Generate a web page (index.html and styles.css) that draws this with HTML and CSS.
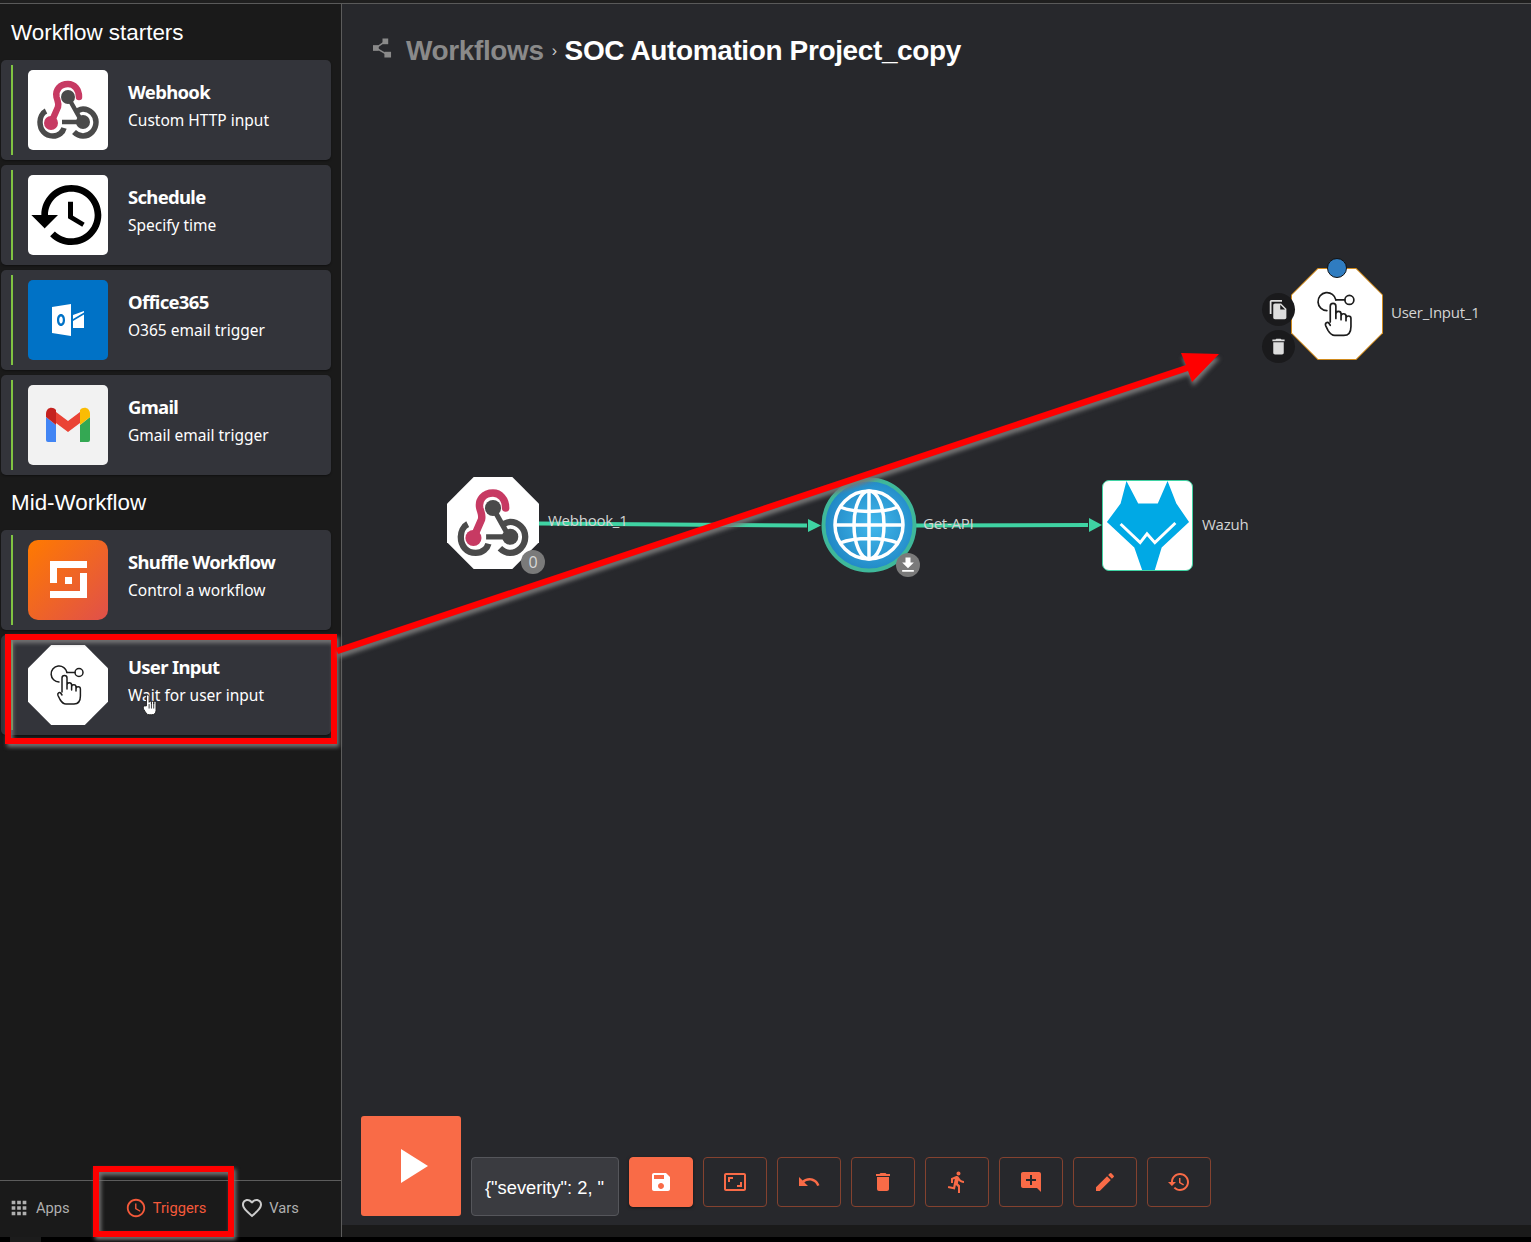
FILE: index.html
```html
<!DOCTYPE html>
<html lang="en">
<head>
<meta charset="utf-8">
<title>SOC Automation Project_copy</title>
<link rel="stylesheet" href="styles.css">
</head>
<body>
<svg class="defs" width="0" height="0" aria-hidden="true">
  <symbol id="webhook" viewBox="0 0 80 80">
    <path d="M51 27C51 19 46 14 40 14 32 14 27 20 28.500 27 29.500 31 31 33 30 37L23 53" fill="none" stroke="#c73a63" stroke-width="6.500" stroke-linecap="round"/>
    <circle cx="23" cy="53" r="7" fill="#c73a63"/>
    <path d="M40 27 54 52H34" fill="none" stroke="#fff" stroke-width="8"/>
    <path d="M40 27 54 52H34" fill="none" stroke="#4a4a4a" stroke-width="4.500"/>
    <circle cx="40" cy="27" r="7" fill="#4a4a4a"/>
    <circle cx="55" cy="52" r="7" fill="#4a4a4a"/>
    <path d="M18 41C14 43 12 48 12 52 12 60 17 66 25 66 31 66 35 62 36 58" fill="none" stroke="#4a4a4a" stroke-width="5.500"/>
    <path d="M46 62C49 65 52 66 55 66 62 66 68 60 68 52 68 45 62 39 55 39 53 39 51 40 49 41" fill="none" stroke="#4a4a4a" stroke-width="5.500"/>
  </symbol>
  <symbol id="hand" viewBox="0 0 80 80">
    <g fill="none" stroke="#1c1c1c" stroke-width="1.500" stroke-linecap="round" stroke-linejoin="round">
      <path d="M39 27.500A8 8 0 1 0 31 37"/>
      <path d="M39 27.500H47"/>
      <circle cx="51" cy="27.500" r="4"/>
      <path d="M34 47V33a2.500 2.500 0 0 1 5 0V44V40a2.300 2.300 0 0 1 4.600 0V45V42a2.200 2.200 0 0 1 4.400 0V46V44a2.200 2.200 0 0 1 4.400 0V51C52.400 56 50 59 46 59H38C35 59 33.500 57 32 54.500L30 50.500C29 48 31.500 46.500 33 48.500L34 50"/>
    </g>
  </symbol>
</svg>

<div class="topline"></div>
<div class="app">
  <aside class="sidebar">
    <h2 class="heading">Workflow starters</h2>
    <div class="cards">
      <div class="card">
        <div class="icon white"><svg class="fill"><use href="#webhook"/></svg></div>
        <div class="card-text"><div class="card-title">Webhook</div><div class="card-sub">Custom HTTP input</div></div>
      </div>
      <div class="card">
        <div class="icon white"><svg class="fill" viewBox="0 0 24 24"><path fill="#000" d="M13 3c-4.970 0-9 4.030-9 9H1l3.890 3.890.07.14L9 12H6c0-3.870 3.130-7 7-7s7 3.130 7 7-3.130 7-7 7c-1.930 0-3.680-.79-4.940-2.060l-1.420 1.420C8.270 19.990 10.510 21 13 21c4.970 0 9-4.030 9-9s-4.030-9-9-9zm-1 5v5l4.280 2.540.72-1.210-3.500-2.080V8h-2z"/></svg></div>
        <div class="card-text"><div class="card-title">Schedule</div><div class="card-sub">Specify time</div></div>
      </div>
      <div class="card">
        <div class="icon blue"><svg class="fill" viewBox="0 0 80 80"><path fill="#fff" fill-rule="evenodd" d="M24 27 43 24V56L24 53ZM33 34C30.500 34 29 36.500 29 40S30.500 46 33 46 37 43.500 37 40 35.500 34 33 34ZM33 36.500C34 36.500 34.800 38 34.800 40S34 43.500 33 43.500 31.200 42 31.200 40 32 36.500 33 36.500Z"/><path fill="#fff" d="M45 35 56 31V32.500L45 39ZM45 41 56 34.500V48H45Z"/></svg></div>
        <div class="card-text"><div class="card-title">Office365</div><div class="card-sub">O365 email trigger</div></div>
      </div>
      <div class="card">
        <div class="icon light"><svg class="fill" viewBox="0 0 80 80">
          <path fill="#4285f4" d="M18 32V55a2 2 0 0 0 2 2H28V40Z"/>
          <path fill="#34a853" d="M52 40V57H60a2 2 0 0 0 2-2V32Z"/>
          <path fill="#ea4335" d="M28 27 40 36 52 27V38L40 47 28 38Z"/>
          <path fill="#c5221f" d="M18 29C18 22 25 21 28 25V40L18 32Z"/>
          <path fill="#fbbc04" d="M62 29C62 22 55 21 52 25V40L62 32Z"/>
        </svg></div>
        <div class="card-text"><div class="card-title">Gmail</div><div class="card-sub">Gmail email trigger</div></div>
      </div>
    </div>
    <h2 class="heading">Mid-Workflow</h2>
    <div class="cards">
      <div class="card">
        <div class="icon shuffle"><svg class="fill" viewBox="0 0 80 80"><path fill="#fff" d="M22 21H59V28H29V43H22ZM59 33V58H22V51H52V33ZM37 37H44V44H37Z"/></svg></div>
        <div class="card-text"><div class="card-title">Shuffle Workflow</div><div class="card-sub">Control a workflow</div></div>
      </div>
      <div class="card">
        <div class="icon white octagon"><svg class="fill"><use href="#hand"/></svg></div>
        <div class="card-text"><div class="card-title">User Input</div><div class="card-sub">Wait for user input</div></div>
      </div>
    </div>
    <div class="spacer"></div>
    <nav class="tabs">
      <div class="tab tab-apps"><svg class="tab-icon" viewBox="0 0 24 24"><path fill="currentColor" d="M4 8h4V4H4v4zm6 12h4v-4h-4v4zm-6 0h4v-4H4v4zm0-6h4v-4H4v4zm6 0h4v-4h-4v4zm6-10v4h4V4h-4zm-6 4h4V4h-4v4zm6 6h4v-4h-4v4zm0 6h4v-4h-4v4z"/></svg><span>Apps</span></div>
      <div class="tab tab-triggers"><svg class="tab-icon" viewBox="0 0 24 24"><path fill="currentColor" d="M11.990 2C6.470 2 2 6.480 2 12s4.470 10 9.990 10C17.520 22 22 17.520 22 12S17.520 2 11.990 2zM12 20c-4.420 0-8-3.580-8-8s3.580-8 8-8 8 3.580 8 8-3.580 8-8 8zm.5-13H11v6l5.250 3.150.75-1.230-4.500-2.670z"/></svg><span>Triggers</span></div>
      <div class="tab tab-vars"><svg class="tab-icon" viewBox="0 0 24 24"><path fill="currentColor" d="M16.500 3c-1.740 0-3.410.81-4.500 2.090C10.910 3.810 9.240 3 7.500 3 4.420 3 2 5.420 2 8.500c0 3.780 3.400 6.860 8.550 11.540L12 21.350l1.450-1.320C18.600 15.360 22 12.280 22 8.500 22 5.420 19.580 3 16.500 3zm-4.400 15.550l-.1.1-.1-.1C7.140 14.240 4 11.390 4 8.500 4 6.500 5.500 5 7.500 5c1.540 0 3.040.99 3.570 2.360h1.870C13.460 5.990 14.960 5 16.500 5c2 0 3.500 1.500 3.500 3.500 0 2.890-3.140 5.740-7.900 10.050z"/></svg><span>Vars</span></div>
    </nav>
  </aside>

  <main class="main">
    <div class="canvas">
      <header class="title">
        <svg class="wf-icon" viewBox="0 0 20 20"><g fill="#8a8a8a"><rect x="10" y="0" width="6" height="6"/><rect x="0" y="7" width="6" height="6"/><rect x="12" y="14" width="7" height="6"/></g><path d="M13 3 3 10 15 17" fill="none" stroke="#8a8a8a" stroke-width="1.600"/></svg>
        <span class="crumb">Workflows</span><span class="sep">›</span><span class="current">SOC Automation Project_copy</span>
      </header>

      <svg class="edges" width="1189" height="1221">
        <g fill="#3fd3a3">
          <path d="M197 517.500 465 519.500V523.500L197 521.500Z"/><path d="M466 515 479 521.500 466 528Z"/>
          <path d="M574 519.500 746 519V523L574 523.500Z"/><path d="M747 514 760 521 747 528Z"/>
        </g>
      </svg>

      <div class="node node-webhook"><div class="octagon white node-fill"><svg class="fill"><use href="#webhook"/></svg></div></div>
      <span class="node-label label-webhook">Webhook_1</span>
      <span class="badge badge-count">0</span>

      <div class="node node-globe">
        <svg class="fill" viewBox="0 0 96 96">
          <defs><radialGradient id="g" cx="55%" cy="50%" r="55%"><stop offset="0" stop-color="#42b8ec"/><stop offset="1" stop-color="#1f86c4"/></radialGradient></defs>
          <circle cx="48" cy="48" r="45.500" fill="url(#g)" stroke="#3fb89a" stroke-width="4"/>
          <g fill="none" stroke="#fff" stroke-width="3.500">
            <circle cx="48" cy="48" r="34"/>
            <ellipse cx="48" cy="48" rx="15" ry="34"/>
            <path d="M48 14V82M14 48H82M19 30C34 36 62 36 77 30M19 66C34 60 62 60 77 66"/>
          </g>
        </svg>
      </div>
      <span class="node-label label-api">Get-API</span>
      <span class="badge badge-download"><svg viewBox="0 0 24 24"><path fill="#fff" d="M19 9h-4V3H9v6H5l7 7 7-7zM5 18v2h14v-2H5z"/></svg></span>

      <div class="node node-wazuh">
        <svg class="fill" viewBox="0 0 91 91"><path fill="#00a9e5" d="M24 0 36 23H56L66 0 75 23 88 42 60 68 53 91H40L32 68 4 42 18 23Z"/><path d="M18 44 38 63 45 54 53 63 74 43" fill="none" stroke="#fff" stroke-width="3"/></svg>
      </div>
      <span class="node-label label-wazuh">Wazuh</span>

      <div class="node-user"><div class="octagon white node-fill"><svg class="fill"><use href="#hand"/></svg></div></div>
      <span class="node-label label-user">User_Input_1</span>
      <span class="node-dot"></span>
      <span class="round-btn btn-copy"><svg viewBox="0 0 24 24"><path fill="#ddd" d="M16 1H4c-1.100 0-2 .9-2 2v14h2V3h12V1zm-1 4 6 6v10c0 1.100-.9 2-2 2H7.990C6.890 23 6 22.100 6 21l.01-14c0-1.100.89-2 1.990-2h7zm-1 7h5.500L14 6.500V12z"/></svg></span>
      <span class="round-btn btn-trash"><svg viewBox="0 0 24 24"><path fill="#ddd" d="M6 19c0 1.100.9 2 2 2h8c1.100 0 2-.9 2-2V7H6v12zM19 4h-3.500l-1-1h-5l-1 1H5v2h14V4z"/></svg></span>

      <div class="toolbar">
        <button class="play"><svg viewBox="0 0 27 34"><path fill="#fff" d="M0 0 27 17 0 34Z"/></svg></button>
        <div class="exec-arg">{"severity": 2, "</div>
        <div class="tools">
          <button class="tool solid"><svg viewBox="0 0 24 24"><path d="M17 3H5c-1.110 0-2 .9-2 2v14c0 1.100.89 2 2 2h14c1.100 0 2-.9 2-2V7l-4-4zm-5 16c-1.660 0-3-1.340-3-3s1.340-3 3-3 3 1.340 3 3-1.340 3-3 3zm3-10H5V5h10v4z"/></svg></button>
          <button class="tool"><svg viewBox="0 0 24 24"><path d="M19 12h-2v3h-3v2h5v-5zM7 9h3V7H5v5h2V9zm14-6H3c-1.100 0-2 .9-2 2v14c0 1.100.9 2 2 2h18c1.100 0 2-.9 2-2V5c0-1.100-.9-2-2-2zm0 16.010H3V4.990h18v14.020z"/></svg></button>
          <button class="tool"><svg viewBox="0 0 24 24"><path d="M12.500 8c-2.650 0-5.050.99-6.900 2.600L2 7v9h9l-3.620-3.620c1.390-1.160 3.160-1.880 5.120-1.880 3.540 0 6.550 2.310 7.600 5.500l2.370-.78C21.080 11.030 17.150 8 12.500 8z"/></svg></button>
          <button class="tool"><svg viewBox="0 0 24 24"><path d="M6 19c0 1.100.9 2 2 2h8c1.100 0 2-.9 2-2V7H6v12zM19 4h-3.500l-1-1h-5l-1 1H5v2h14V4z"/></svg></button>
          <button class="tool"><svg viewBox="0 0 24 24"><path d="M13.490 5.480c1.100 0 2-.9 2-2s-.9-2-2-2-2 .9-2 2 .9 2 2 2zm-3.600 13.900 1-4.400 2.100 2v6h2v-7.500l-2.100-2 .6-3c1.300 1.500 3.300 2.500 5.500 2.500v-2c-1.900 0-3.500-1-4.300-2.400l-1-1.600c-.4-.6-1-1-1.700-1-.3 0-.5.1-.8.1l-5.200 2.200v4.700h2v-3.400l1.800-.7-1.600 8.100-4.900-1-.4 2 7 1.400z"/></svg></button>
          <button class="tool"><svg viewBox="0 0 24 24"><path d="M21.990 4c0-1.100-.89-2-1.990-2H4c-1.100 0-2 .9-2 2v12c0 1.100.9 2 2 2h14l4 4-.01-18zM17 11h-4v4h-2v-4H7V9h4V5h2v4h4v2z"/></svg></button>
          <button class="tool"><svg viewBox="0 0 24 24"><path d="M3 17.250V21h3.750L17.810 9.940l-3.750-3.750L3 17.250zM20.710 7.040c.39-.39.39-1.020 0-1.410l-2.340-2.340a.9959.9959 0 0 0-1.410 0l-1.830 1.830 3.750 3.750 1.830-1.830z"/></svg></button>
          <button class="tool"><svg viewBox="0 0 24 24"><path d="M13 3c-4.970 0-9 4.030-9 9H1l3.890 3.890.07.14L9 12H6c0-3.870 3.130-7 7-7s7 3.130 7 7-3.130 7-7 7c-1.930 0-3.680-.79-4.940-2.060l-1.420 1.420C8.270 19.990 10.510 21 13 21c4.970 0 9-4.030 9-9s-4.030-9-9-9zm-1 5v5l4.280 2.540.72-1.210-3.500-2.080V8h-2z"/></svg></button>
        </div>
      </div>
    </div>
    <div class="main-foot"></div>
  </main>
</div>
<div class="page-foot"><span class="foot-block"></span></div>

<div class="mark mark-card"></div>
<div class="mark mark-tab"></div>
<svg class="mark-arrow" width="1531" height="1242" viewBox="0 0 1531 1242">
  <path fill="#f00" d="M336 648 1186 365 1181 353 1219 354 1192 382 1188 371 338 654Z"/>
</svg>
<svg class="cursor" viewBox="0 0 18 26"><path fill="#fff" stroke="#222" stroke-width="1.100" d="M5 14V3a1.500 1.500 0 0 1 3 0V10a1.300 1.300 0 0 1 2.600 0V12 10a1.300 1.300 0 0 1 2.600 0V12 10a1.300 1.300 0 0 1 2.600 0V19C15.800 22 14 24 11 24H8C5 24 4 21 2 18 1 16 1 14 3 14Z"/><path d="M8 12V17M10.600 12V17M13.200 12V17" stroke="#222" stroke-width="1"/></svg>
</body>
</html>
```
FILE: styles.css
```css
* { box-sizing: border-box; }
html, body { margin: 0; padding: 0; background: #000; }
body { width: 1531px; height: 1242px; overflow: hidden; position: relative; font-family: "Liberation Sans", Arial, sans-serif; }
.defs { position: absolute; }
.topline { height: 4px; background: #1f1f1f; border-bottom: 1px solid #5a5a5a; }
.app { display: flex; height: 1233px; }

.sidebar { width: 342px; flex: none; display: flex; flex-direction: column; background: #1a1a1a; border-right: 1px solid #5c5c5c; padding-top: 1px; }
.heading { margin: 0; height: 55px; padding-left: 11px; display: flex; align-items: center; color: #fff; font-weight: 400; font-size: 22.4px; font-family: "Liberation Sans", Arial, sans-serif; }
.cards { display: flex; flex-direction: column; gap: 5px; padding-left: 1px; }
.card { position: relative; width: 330px; height: 100px; background: #33343a; border-radius: 5px; display: flex; align-items: center; padding-left: 27px; gap: 20px; box-shadow: 0 1px 2px rgba(0,0,0,.4); }
.card::before { content: ""; position: absolute; left: 10px; top: 5px; bottom: 5px; width: 2px; background: #80c342; }
.icon { width: 80px; height: 80px; border-radius: 5px; overflow: hidden; flex: none; }
.fill { display: block; width: 100%; height: 100%; }
.white { background: #fff; }
.blue { background: #0072c6; }
.light { background: #f2f2f2; }
.shuffle { background: linear-gradient(135deg, #ff7a00, #e0504a); border-radius: 10px; }
.octagon { border-radius: 0; clip-path: polygon(29% 0, 71% 0, 100% 29%, 100% 71%, 71% 100%, 29% 100%, 0 71%, 0 29%); }
.card-text { display: flex; flex-direction: column; color: #fff; margin-top: -10px; }
.card-title { font-family: "Noto Sans", sans-serif; font-weight: 700; font-size: 18.5px; line-height: 26px; letter-spacing: -0.7px; }
.card-sub { font-family: "Noto Sans", sans-serif; font-size: 15.5px; line-height: 24px; margin-top: 3px; }

.spacer { flex: 1; }
.tabs { height: 57px; flex: none; border-top: 1px solid #5c5c5c; display: flex; align-items: center; font-family: Roboto, sans-serif; font-size: 14.7px; color: #b0b0b0; padding-bottom: 2px; }
.tab { display: flex; align-items: center; }
.tab-icon { width: 22px; height: 22px; flex: none; }
.tab-apps { margin-left: 8px; gap: 6px; }
.tab-triggers { margin-left: 55px; gap: 6px; color: #f4593a; }
.tab-vars { margin-left: 34px; gap: 5px; }
.tab-vars .tab-icon { color: #ccc; width: 24px; height: 24px; }

.main { flex: 1; display: flex; flex-direction: column; background: #1a1a1a; }
.canvas { position: relative; flex: 1; background: #27282c; display: flex; flex-direction: column; padding-left: 19px; }
.main-foot { height: 12px; flex: none; }
.title { margin-top: 29px; height: 36px; display: flex; align-items: center; font-weight: 700; font-size: 28px; letter-spacing: -0.38px; }
.wf-icon { width: 19px; height: 20px; margin: 0 0 6px 12px; flex: none; }
.crumb { margin-left: 14px; color: #8a8a8a; }
.sep { margin: 0 8px; color: #ccc; font-size: 16px; font-weight: 400; }
.current { color: #fff; }

.edges { position: absolute; left: 0; top: 0; pointer-events: none; }
.node { position: absolute; }
.node-fill { width: 100%; height: 100%; }
.node-webhook { left: 105px; top: 473px; width: 92px; height: 92px; }
.node-globe { left: 479px; top: 473px; width: 96px; height: 96px; }
.node-wazuh { left: 760px; top: 476px; width: 91px; height: 91px; background: #fff; border: 1px solid #3fd3a3; border-radius: 7px; overflow: hidden; }
.node-user { position: absolute; left: 949px; top: 264px; width: 92px; height: 92px; background: #d08a1c; clip-path: polygon(29% 0, 71% 0, 100% 29%, 100% 71%, 71% 100%, 29% 100%, 0 71%, 0 29%); padding: 1px; }
.node-label { position: absolute; font-family: "Open Sans", sans-serif; font-size: 15px; line-height: 20px; color: #d4d4d4; letter-spacing: -0.25px; white-space: nowrap; }
.label-webhook { left: 206px; top: 506px; }
.label-api { left: 581px; top: 509px; }
.label-wazuh { left: 860px; top: 510px; }
.label-user { left: 1049px; top: 298px; }
.badge { position: absolute; width: 24px; height: 24px; border-radius: 50%; background: #7a7a7a; color: #d8d8d8; display: flex; align-items: center; justify-content: center; font-family: "Open Sans", sans-serif; font-size: 16px; }
.badge svg { width: 20px; height: 20px; }
.badge-count { left: 179px; top: 546px; }
.badge-download { left: 554px; top: 549px; }
.node-dot { position: absolute; left: 985px; top: 254px; width: 20px; height: 20px; border-radius: 50%; background: #2f7cc0; border: 1px solid #111; }
.round-btn { position: absolute; width: 33px; height: 33px; border-radius: 50%; background: #1a1a1c; display: flex; align-items: center; justify-content: center; }
.round-btn svg { width: 21px; height: 21px; }
.btn-copy { left: 920px; top: 289px; }
.btn-trash { left: 920px; top: 326px; }

.toolbar { margin-top: auto; margin-bottom: 9px; display: flex; align-items: flex-end; gap: 10px; }
.play { width: 100px; height: 100px; padding: 0; border: 0; border-radius: 3px; background: #f96b47; display: flex; align-items: center; justify-content: center; }
.play svg { width: 27px; height: 34px; margin-left: 7px; }
.exec-arg { width: 148px; height: 59px; background: #3a3b40; border: 1px solid #55565b; border-radius: 4px; display: flex; align-items: center; padding: 2px 0 0 13px; color: #fff; font-family: "Liberation Sans", sans-serif; font-size: 18.3px; white-space: nowrap; }
.tools { display: flex; gap: 10px; margin-bottom: 9px; }
.tool { width: 64px; height: 50px; padding: 0; background: transparent; border: 1px solid #84422f; border-radius: 4px; display: flex; align-items: center; justify-content: center; }
.tool svg { width: 24px; height: 24px; fill: #f96b47; }
.tool.solid { background: #f96b47; border-color: #f96b47; box-shadow: 0 1px 3px rgba(0,0,0,.5); }
.tool.solid svg { fill: #fff; }

.page-foot { height: 5px; background: #000; }
.foot-block { display: block; margin-left: 10px; width: 31px; height: 5px; background: #1c1c1c; }

.mark { position: absolute; border: 6px solid #f00; filter: drop-shadow(2px 3px 2px #777); }
.mark-card { left: 5px; top: 634px; width: 332px; height: 110px; }
.mark-tab { left: 93px; top: 1166px; width: 141px; height: 71px; }
.mark-arrow { position: absolute; left: 0; top: 0; filter: drop-shadow(1px 4px 2px #777); pointer-events: none; }
.cursor { position: absolute; left: 142px; top: 693px; width: 16px; height: 24px; }
```
